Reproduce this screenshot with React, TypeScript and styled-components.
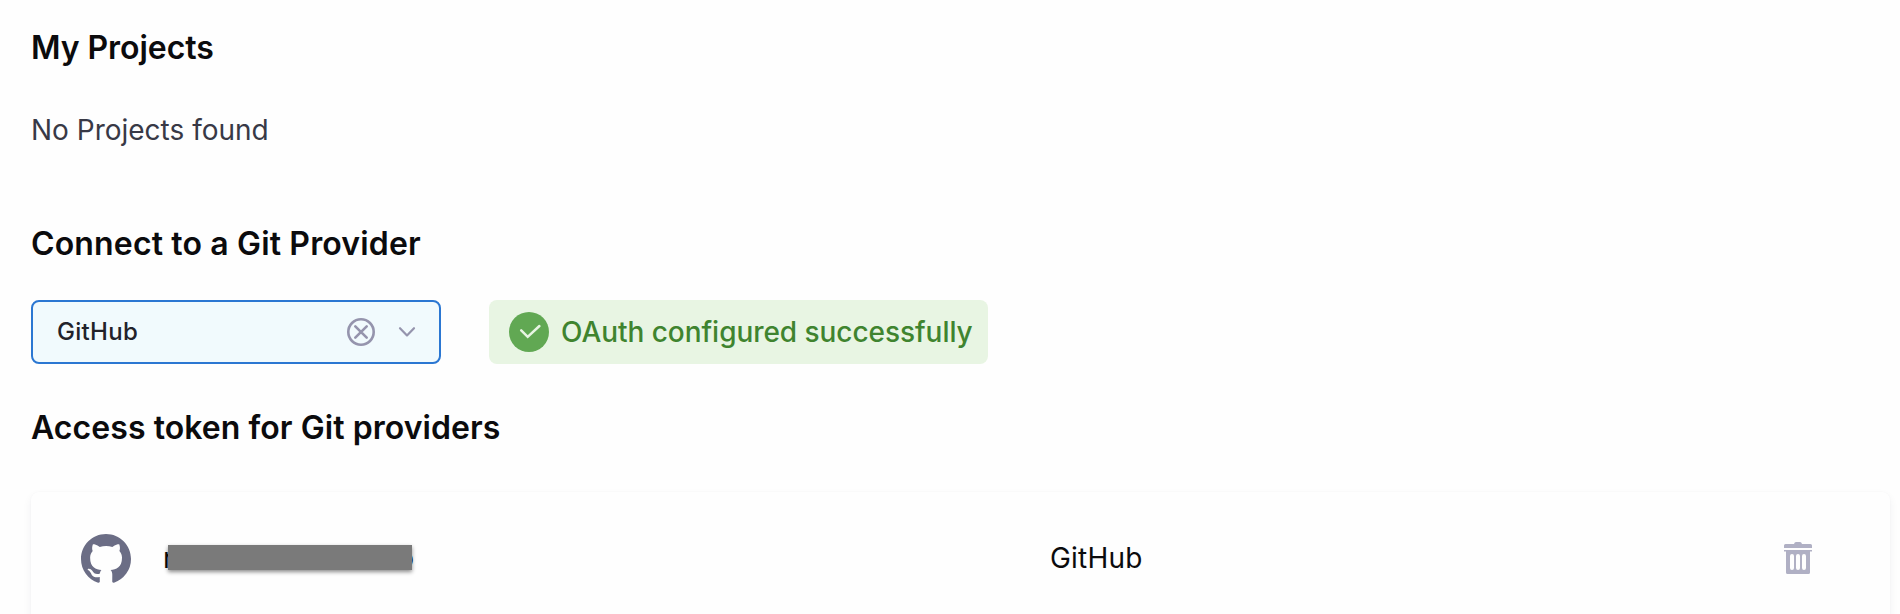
import React from "react";
import styled, { createGlobalStyle } from "styled-components";

const GlobalStyle = createGlobalStyle`
  * { box-sizing: border-box; }
  body {
    margin: 0;
    background: #fefefe;
    font-family: Inter, "Liberation Sans", sans-serif;
    overflow: hidden;
  }
`;

const Page = styled.main`
  display: flex;
  flex-direction: column;
  height: 614px;
  padding: 28px 10px 0 31px;
  overflow: hidden;
`;

const Heading = styled.h2<{ $gap: number; $tracking?: number }>`
  margin: 0 0 ${(p) => p.$gap}px;
  font-size: 32px;
  line-height: 40px;
  font-weight: 600;
  letter-spacing: ${(p) => p.$tracking ?? 0}px;
  color: #0b0b0d;
  white-space: nowrap;
`;

const EmptyText = styled.p`
  margin: 0 0 74px;
  font-size: 28px;
  line-height: 40px;
  color: #383946;
`;

const ProviderRow = styled.div`
  display: flex;
  gap: 48px;
  margin-bottom: 44px;
`;

const Select = styled.div`
  display: flex;
  align-items: center;
  width: 410px;
  height: 64px;
  padding: 0 22px 0 24px;
  border: 2px solid #2b77d2;
  border-radius: 8px;
  background: #f1fafd;
  color: #22222a;
  font-size: 24px;
  font-weight: 500;
  letter-spacing: 0.3px;
`;

const SelectValue = styled.span`
  flex: 1;
  padding-bottom: 1px;
`;

const ClearIcon = styled.svg`
  width: 28px;
  height: 28px;
  margin-right: 22px;
`;

const ChevronIcon = styled.svg`
  width: 20px;
  height: 12px;
`;

const Success = styled.div`
  display: flex;
  align-items: center;
  gap: 12px;
  width: 499px;
  height: 64px;
  padding-left: 20px;
  border-radius: 8px;
  background: #e8f5e3;
  color: #3f842f;
  font-size: 28px;
  font-weight: 500;
  letter-spacing: -0.05px;
  white-space: nowrap;
`;

const CheckIcon = styled.svg`
  width: 40px;
  height: 40px;
`;

const TokenCard = styled.section`
  display: grid;
  grid-template-columns: 50px 919px 1fr 28px;
  align-items: center;
  flex: none;
  height: 132px;
  padding: 0 78px 0 50px;
  border-radius: 8px;
  background: #fefefe;
  box-shadow: 0 4px 10px rgba(40, 41, 61, 0.06), 0 0 2px rgba(40, 41, 61, 0.03);
`;

const GithubIcon = styled.svg`
  width: 50px;
  height: 50px;
  margin-top: 1px;
`;

const TokenName = styled.div`
  position: relative;
  display: flex;
  justify-content: space-between;
  width: 251px;
  margin-left: 32px;
  font-size: 28px;
  line-height: 40px;
  color: #0b0b0d;
`;

const Redaction = styled.span`
  position: absolute;
  left: 5px;
  top: 7px;
  width: 244px;
  height: 25px;
  background: #7a7a7a;
  box-shadow: 0 2px 4px rgba(0, 0, 0, 0.45);
`;

const TokenProvider = styled.span`
  font-size: 28px;
  line-height: 40px;
  letter-spacing: 0.2px;
  color: #0b0b0d;
`;

const TrashIcon = styled.svg`
  width: 28px;
  height: 32px;
`;

export default function App() {
  return (
    <Page>
      <GlobalStyle />
      <Heading $gap={42} $tracking={-0.05}>My Projects</Heading>
      <EmptyText>No Projects found</EmptyText>
      <Heading $gap={36} $tracking={0.15}>Connect to a Git Provider</Heading>
      <ProviderRow>
        <Select>
          <SelectValue>GitHub</SelectValue>
          <ClearIcon viewBox="0 0 28 28" fill="none" stroke="#9594ad" strokeWidth="2.6" strokeLinecap="round">
            <circle cx="14" cy="14" r="12.7" />
            <path d="M8.3 8.3 19.7 19.7M19.7 8.3 8.3 19.7" />
          </ClearIcon>
          <ChevronIcon viewBox="0 0 20 12" fill="none" stroke="#9594ad" strokeWidth="2.2" strokeLinecap="round" strokeLinejoin="round">
            <path d="M3 2.2 10 9.4 17 2.2" />
          </ChevronIcon>
        </Select>
        <Success>
          <CheckIcon viewBox="0 0 40 40">
            <circle cx="20" cy="20" r="20" fill="#61a853" />
            <path d="M12.2 18.4 18.7 24.8 30.4 14" fill="none" stroke="#e8f5e3" strokeWidth="2.5" strokeLinecap="round" />
          </CheckIcon>
          OAuth configured successfully
        </Success>
      </ProviderRow>
      <Heading $gap={44} $tracking={0.06}>Access token for Git providers</Heading>
      <TokenCard>
        <GithubIcon viewBox="0 0 16 16" fill="#6b6d85">
          <path d="M8 0C3.58 0 0 3.58 0 8c0 3.54 2.29 6.53 5.47 7.59.4.07.55-.17.55-.38 0-.19-.01-.82-.01-1.49-2.01.37-2.53-.49-2.69-.94-.09-.23-.48-.94-.82-1.13-.28-.15-.68-.52-.01-.53.63-.01 1.08.58 1.23.82.72 1.21 1.87.87 2.33.66.07-.52.28-.87.51-1.07-1.78-.2-3.64-.89-3.64-3.95 0-.87.31-1.59.82-2.15-.08-.2-.36-1.02.08-2.12 0 0 .67-.21 2.2.82.64-.18 1.32-.27 2-.27s1.36.09 2 .27c1.53-1.04 2.2-.82 2.2-.82.44 1.1.16 1.92.08 2.12.51.56.82 1.27.82 2.15 0 3.07-1.87 3.75-3.65 3.95.29.25.54.73.54 1.48 0 1.07-.01 1.93-.01 2.2 0 .21.15.46.55.38A8.01 8.01 0 0 0 16 8c0-4.42-3.58-8-8-8Z" />
        </GithubIcon>
        <TokenName>
          <span>r</span>
          <span>o</span>
          <Redaction />
        </TokenName>
        <TokenProvider>GitHub</TokenProvider>
        <TrashIcon viewBox="0 0 28 32" fill="#b0b0c4">
          <path d="M0 3.5Q0 2 1.5 2H10Q10.500 0 12 0H16Q17.500 0 18 2H26.500Q28 2 28 3.500V6H0Z" />
          <path fillRule="evenodd" d="M0 8H28V9.500H26V30.500Q26 32 24.500 32H3.500Q2 32 2 30.500V9.500H0ZM6 14V26A2 2 0 0 0 10 26V14A2 2 0 0 0 6 14ZM12 14V26A2 2 0 0 0 16 26V14A2 2 0 0 0 12 14ZM18 14V26A2 2 0 0 0 22 26V14A2 2 0 0 0 18 14Z" />
        </TrashIcon>
      </TokenCard>
    </Page>
  );
}
